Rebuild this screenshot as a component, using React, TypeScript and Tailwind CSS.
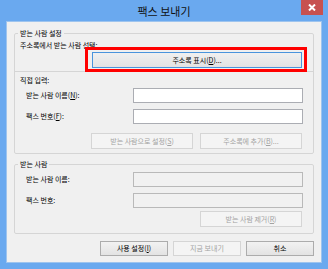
import React, { ReactNode } from "react";

const font = "font-['Noto_Sans_CJK_KR','Noto_Sans',sans-serif]";

// underlined access key, the way Windows dialogs draw it
function Key({ k }: { k: string }) {
  return (
    <>
      (<span className="underline underline-offset-[1px]">{k}</span>)
    </>
  );
}

function DlgButton({
  children,
  width,
  disabled = false,
  focused = false,
  height = "h-[16px]",
}: {
  children: ReactNode;
  width: string;
  disabled?: boolean;
  focused?: boolean;
  height?: string;
}) {
  const look = disabled
    ? "border-[#d5d5d5] bg-[#f4f4f4] text-[#a3a3a3]"
    : focused
      ? "border-[#4a94dc] bg-gradient-to-b from-[#f0f0f0] to-[#e3e3e3] text-[#000]"
      : "border-[#acacac] bg-gradient-to-b from-[#f2f2f2] to-[#e3e3e3] text-[#000]";
  return (
    <div
      className={`${width} ${height} flex items-center justify-center border text-[7px] leading-none ${look}`}
    >
      {children}
    </div>
  );
}

function FieldRow({
  label,
  disabled = false,
}: {
  label: ReactNode;
  disabled?: boolean;
}) {
  return (
    <div className="flex items-center h-[15px]">
      <span className="ml-[6px] text-[7px] leading-none text-[#000]">{label}</span>
      <div
        className={`ml-auto w-[170px] h-full border ${
          disabled ? "border-[#b9b9b9] bg-[#f1f1f1]" : "border-[#abadb3] bg-white"
        }`}
      />
    </div>
  );
}

export default function App() {
  return (
    <div className={`w-[328px] h-[269px] bg-[#6aa9ef] flex flex-col ${font}`}>
      {/* title bar */}
      <div className="relative h-[21px] flex items-center justify-center">
        <span className="text-[11px] leading-none text-[#111] mt-[1px]">팩스 보내기</span>
        <div className="absolute right-[5px] top-0 w-[22px] h-[15px] bg-[#c75150] flex items-center justify-center">
          <svg width="8" height="7" viewBox="0 0 8 7">
            <path d="M1 0.5 L7 6.5 M7 0.5 L1 6.5" stroke="white" strokeWidth="2" />
          </svg>
        </div>
      </div>

      {/* client area */}
      <div className="flex-1 mx-[6px] mb-[6px] bg-[#f0f0f0] border border-[#9ec4ee] pl-[7px] pr-[7px] pt-[6px] flex flex-col">
        <fieldset className="border border-[#d5d5d5] rounded-[2px] pl-[5px] pr-[10px] pb-[4px]">
          <legend className="-ml-[2px] px-[2px] text-[7px] leading-[10px] text-[#000]">
            받는 사람 설정
          </legend>
          <div className="mt-[2px] h-[10px] text-[7px] leading-[10px] text-[#000]">
            주소록에서 받는 사람 선택:
          </div>
          <div className="mt-[2px] flex justify-end">
            <div className="relative mr-[1px]">
              <DlgButton width="w-[210px]" focused>
                <span>
                  주소록 표시<Key k="D" />...
                </span>
              </DlgButton>
              <div className="absolute -left-[7px] -right-[5px] -top-[5px] -bottom-[4px] border-[3px] border-[#ff0000]" />
            </div>
          </div>
          <div className="mt-[3px] h-px bg-[#d5d5d5] -ml-[5px] -mr-[10px]" />
          <div className="mt-[3px] h-[10px] text-[7px] leading-[10px] text-[#000]">직접 입력:</div>
          <div className="mt-[3px]">
            <FieldRow
              label={
                <>
                  받는 사람 이름<Key k="N" />:
                </>
              }
            />
          </div>
          <div className="mt-[6px]">
            <FieldRow
              label={
                <>
                  팩스 번호<Key k="F" />:
                </>
              }
            />
          </div>
          <div className="mt-[9px] flex justify-end gap-[7px] mr-[1px]">
            <DlgButton width="w-[102px]" disabled>
              <span>
                받는 사람으로 설정<Key k="S" />
              </span>
            </DlgButton>
            <DlgButton width="w-[102px]" disabled>
              <span>
                주소록에 추가<Key k="B" />...
              </span>
            </DlgButton>
          </div>
        </fieldset>

        <fieldset className="mt-[5px] border border-[#d5d5d5] rounded-[2px] pl-[5px] pr-[10px] pb-[6px]">
          <legend className="-ml-[2px] px-[2px] text-[7px] leading-[10px] text-[#000]">받는 사람</legend>
          <div className="mt-[3px]">
            <FieldRow label="받는 사람 이름:" disabled />
          </div>
          <div className="mt-[6px]">
            <FieldRow label="팩스 번호:" disabled />
          </div>
          <div className="mt-[3px] flex justify-end mr-[1px]">
            <DlgButton width="w-[102px]" disabled>
              <span>
                받는 사람 제거<Key k="R" />
              </span>
            </DlgButton>
          </div>
        </fieldset>

        <div className="mt-[7px] flex justify-end gap-[5px]">
          <DlgButton width="w-[68px]" height="h-[15px]">
            <span>
              사용 설정<Key k="I" />
            </span>
          </DlgButton>
          <DlgButton width="w-[68px]" height="h-[15px]" disabled>
            지금 보내기
          </DlgButton>
          <DlgButton width="w-[68px]" height="h-[15px]">
            취소
          </DlgButton>
        </div>
      </div>
    </div>
  );
}
